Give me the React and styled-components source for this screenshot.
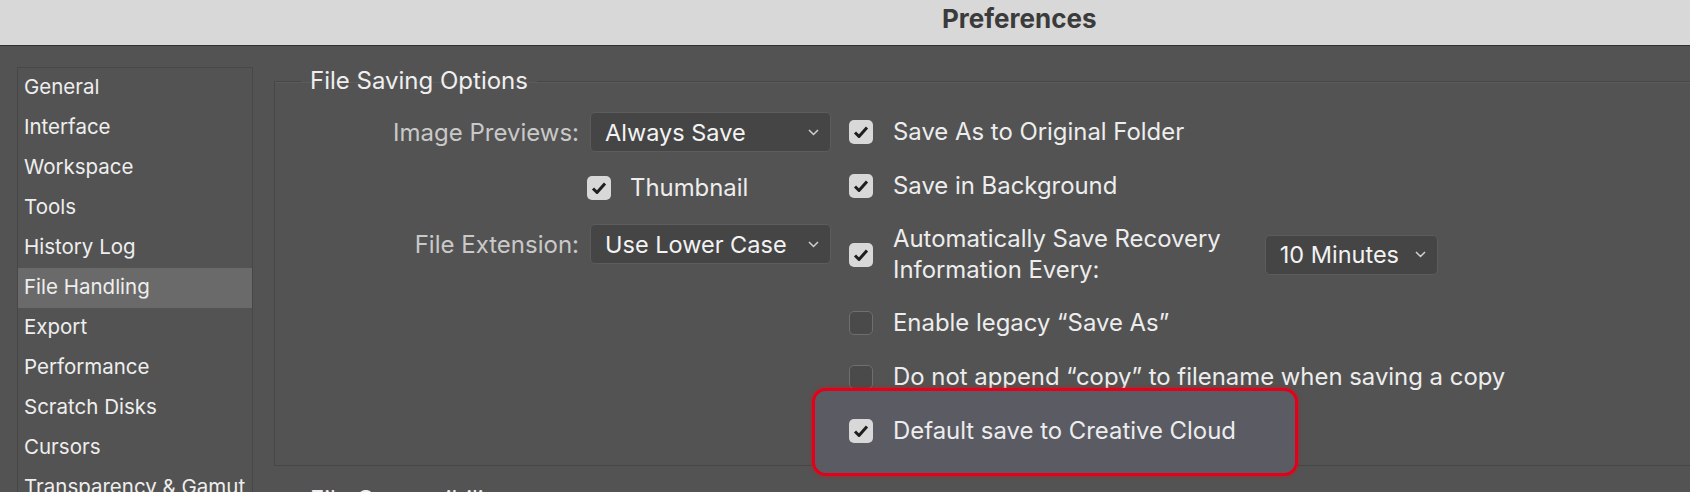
import React from 'react';
import styled, { createGlobalStyle } from 'styled-components';

const GlobalStyle = createGlobalStyle`
  html, body {
    margin: 0;
    padding: 0;
    background: #535353;
    overflow: hidden;
  }
  body {
    font-family: Inter, "Noto Sans", sans-serif;
    -webkit-font-smoothing: antialiased;
  }
`;

const Window = styled.div`
  width: 1690px;
  height: 492px;
  overflow: hidden;
  background: #535353;
  display: flex;
  flex-direction: column;
`;

const TitleBar = styled.div`
  height: 46px;
  flex-shrink: 0;
  box-sizing: border-box;
  background: #d8d8d8;
  border-bottom: 1px solid #303030;
  display: flex;
  align-items: center;
  padding: 0 0 9px 942px;
  font-size: 26px;
  font-weight: 700;
  color: #3b3b3b;
`;

const Body = styled.div`
  display: flex;
  align-items: flex-start;
  gap: 21px;
  padding: 21px 0 0 17px;
`;

const Sidebar = styled.div`
  width: 236px;
  height: 470px;
  flex-shrink: 0;
  box-sizing: border-box;
  border: 1px solid #474747;
  background: #535353;
`;

const NavItem = styled.div`
  height: 40px;
  box-sizing: border-box;
  display: flex;
  align-items: center;
  padding: 0 0 4px 6px;
  font-size: 20.5px;
  color: #eeeeee;
  white-space: nowrap;
  background: ${p => (p.$active ? '#6a6a6a' : 'transparent')};
`;

const Main = styled.div`
  display: flex;
  flex-direction: column;
  gap: 20px;
`;

const Group = styled.fieldset`
  margin: 0;
  width: 1500px;
  min-width: 0;
  box-sizing: border-box;
  border: 1px solid #474747;
  box-shadow: inset 0 1px 0 #5b5b5b;
  padding: 10px 0 7px 26px;
`;

const Legend = styled.legend`
  padding: 0 9px;
  font-size: 24px;
  line-height: 28px;
  color: #efefef;
`;

const Columns = styled.div`
  display: flex;
  gap: 18px;
`;

const LeftCol = styled.div`
  display: grid;
  grid-template-columns: 278px 241px;
  grid-auto-rows: 56px;
  column-gap: 11px;
  align-items: center;
  align-content: start;
  margin-top: -1px;
`;

const FieldLabel = styled.div`
  text-align: right;
  font-size: 24px;
  color: #c9c9c9;
  white-space: nowrap;
`;

const Select = styled.div`
  height: 40px;
  width: ${p => p.$width || 'auto'};
  box-sizing: border-box;
  display: flex;
  align-items: center;
  justify-content: space-between;
  padding: 0 11px 0 14px;
  background: #454545;
  border: 1px solid #5c5c5c;
  border-radius: 5px;
  font-size: 23.5px;
  color: #f3f3f3;
  white-space: nowrap;
  flex-shrink: 0;
`;

const RightCol = styled.div`
  display: flex;
  flex-direction: column;
`;

const Row = styled.div`
  position: relative;
  z-index: 0;
  display: flex;
  align-items: center;
  min-height: 54px;
  padding: ${p => (p.$tall ? '11px 0' : '0')};
  box-sizing: border-box;
  gap: 20px;

  ${p =>
    p.$highlight &&
    `
    &::before {
      content: '';
      position: absolute;
      z-index: -1;
      left: -37px;
      top: -16px;
      width: 486px;
      height: 88px;
      box-sizing: border-box;
      border: 3px solid #e4001b;
      border-radius: 14px;
      background: rgba(92, 92, 102, 0.9);
      box-shadow: 0 0 4px rgba(255, 0, 0, 0.55);
    }
  `}
`;

const InlineCheck = styled.div`
  display: flex;
  align-items: center;
  gap: 19px;
  margin-left: -3px;
`;

const Label = styled.span`
  font-size: 23.9px;
  line-height: 30.5px;
  color: #ededed;
  white-space: nowrap;
`;

const Box = styled.span`
  width: 24px;
  height: 24px;
  flex-shrink: 0;
  box-sizing: border-box;
  border-radius: 5px;
  display: flex;
  align-items: center;
  justify-content: center;
  background: ${p => (p.$checked ? '#d8d8d8' : '#4a4a4a')};
  border: ${p => (p.$checked ? 'none' : '1.5px solid #6f6f6f')};
`;

const MinutesWrap = styled.div`
  margin-left: 24px;
`;

const Chevron = () => (
  <svg width="11" height="7" viewBox="0 0 11 7">
    <polyline points="1,1 5.5,5.5 10,1" fill="none" stroke="#d0d0d0" strokeWidth="1.5" />
  </svg>
);

const Checkbox = ({ checked }) => (
  <Box $checked={checked}>
    {checked && (
      <svg width="16" height="14" viewBox="0 0 16 14">
        <polyline points="2,7.5 6,11.5 14,2.5" fill="none" stroke="#1f1f1f" strokeWidth="3" strokeLinejoin="round" />
      </svg>
    )}
  </Box>
);

const navItems = [
  'General',
  'Interface',
  'Workspace',
  'Tools',
  'History Log',
  'File Handling',
  'Export',
  'Performance',
  'Scratch Disks',
  'Cursors',
  'Transparency & Gamut',
];

export default function App() {
  return (
    <Window>
      <GlobalStyle />
      <TitleBar>Preferences</TitleBar>
      <Body>
        <Sidebar>
          {navItems.map(item => (
            <NavItem key={item} $active={item === 'File Handling'}>
              {item}
            </NavItem>
          ))}
        </Sidebar>
        <Main>
          <Group>
            <Legend>File Saving Options</Legend>
            <Columns>
              <LeftCol>
                <FieldLabel>Image Previews:</FieldLabel>
                <Select>
                  Always Save <Chevron />
                </Select>
                <div />
                <InlineCheck>
                  <Checkbox checked />
                  <Label>Thumbnail</Label>
                </InlineCheck>
                <FieldLabel>File Extension:</FieldLabel>
                <Select>
                  Use Lower Case <Chevron />
                </Select>
              </LeftCol>
              <RightCol>
                <Row>
                  <Checkbox checked />
                  <Label>Save As to Original Folder</Label>
                </Row>
                <Row>
                  <Checkbox checked />
                  <Label>Save in Background</Label>
                </Row>
                <Row $tall>
                  <Checkbox checked />
                  <Label>
                    Automatically Save Recovery
                    <br />
                    Information Every:
                  </Label>
                  <MinutesWrap>
                    <Select $width="173px">
                      10 Minutes <Chevron />
                    </Select>
                  </MinutesWrap>
                </Row>
                <Row>
                  <Checkbox />
                  <Label>Enable legacy “Save As”</Label>
                </Row>
                <Row>
                  <Checkbox />
                  <Label>Do not append “copy” to filename when saving a copy</Label>
                </Row>
                <Row $highlight>
                  <Checkbox checked />
                  <Label>Default save to Creative Cloud</Label>
                </Row>
              </RightCol>
            </Columns>
          </Group>
          <Group>
            <Legend>File Compatibility</Legend>
          </Group>
        </Main>
      </Body>
    </Window>
  );
}
